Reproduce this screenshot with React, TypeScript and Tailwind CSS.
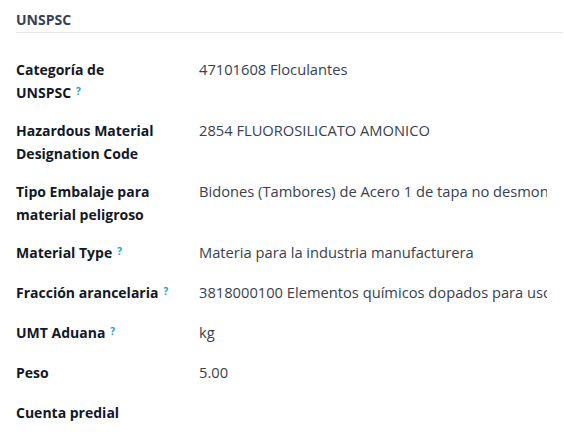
const rows: { label: string[]; help?: boolean; value: string; tall?: boolean }[] = [
    { label: ["Categoría de", "UNSPSC"], help: true, value: "47101608 Floculantes" },
    { label: ["Hazardous Material", "Designation Code"], value: "2854 FLUOROSILICATO AMONICO" },
    { label: ["Tipo Embalaje para", "material peligroso"], value: "Bidones (Tambores) de Acero 1 de tapa no desmontable" },
    { label: ["Material Type"], help: true, value: "Materia para la industria manufacturera" },
    { label: ["Fracción arancelaria"], help: true, value: "3818000100 Elementos químicos dopados para uso en electrónica" },
    { label: ["UMT Aduana"], help: true, value: "kg" },
    { label: ["Peso"], value: "5.00" },
    { label: ["Cuenta predial"], value: "" },
];

const Help = () => (
    <sup className="ml-[5px] text-[10px] font-bold text-[#1a9bd7] relative -top-[3px]">?</sup>
);

const App = () => {
    return (
        <div className="w-[564px] h-[432px] overflow-hidden bg-white font-['Open_Sans',sans-serif]">
            <div className="ml-4 mr-[1px] pt-[10px]">
                <div className="text-[14px] font-bold text-[#374151] leading-[19px] pb-[3px] border-b border-[#e5e7eb]">
                    UNSPSC
                </div>
                <div className="pt-[25px]">
                    {rows.map((row, i) => (
                        <div key={i} className="flex min-h-[40px] pb-[15px] leading-[23px]">
                            <div className="w-[183px] shrink-0 text-[14px] font-bold text-[#111827] pr-2">
                                {row.label.map((line, j) => (
                                    <div key={j}>
                                        {line}
                                        {row.help && j === row.label.length - 1 && <Help />}
                                    </div>
                                ))}
                            </div>
                            <div className="w-[348px] overflow-hidden whitespace-nowrap text-[14.7px] text-[#374151]">
                                {row.value}
                            </div>
                        </div>
                    ))}
                </div>
            </div>
        </div>
    );
};

export default App;
